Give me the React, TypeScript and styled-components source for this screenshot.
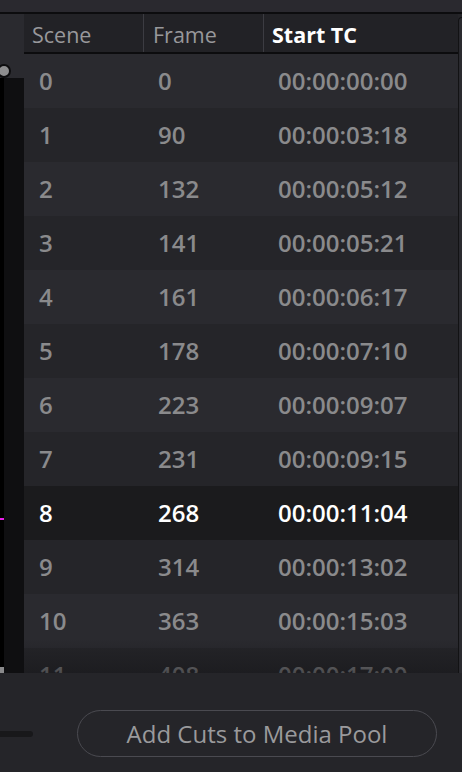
import React from "react";
import styled, { createGlobalStyle } from "styled-components";

const Global = createGlobalStyle`
  html, body { margin: 0; padding: 0; background: #252529; }
  body { font-family: "Open Sans", "Noto Sans", sans-serif; }
  * { box-sizing: border-box; }
`;

const Page = styled.div`
  width: 462px;
  height: 772px;
  display: flex;
  flex-direction: column;
  background: #252529;
  overflow: hidden;
`;

const TopBar = styled.div`
  height: 14px;
  background: #2a292f;
  border-bottom: 2px solid #0c0c0e;
  flex: none;
`;

const Main = styled.div`
  height: 659px;
  display: flex;
  flex: none;
`;

const LeftStrip = styled.div`
  width: 24px;
  display: flex;
  flex-direction: column;
  flex: none;
`;

const LeftTop = styled.div`
  height: 64px;
  background: #2a2a2f;
  position: relative;
  flex: none;
`;

const Handle = styled.div`
  position: absolute;
  left: -3px;
  top: 50px;
  width: 14px;
  height: 14px;
  border-radius: 50%;
  background: #8e8e90;
  border: 2px solid #0d0d0f;
`;

const LeftBody = styled.div`
  flex: 1;
  display: flex;
`;

const Track = styled.div`
  width: 4px;
  background: #000;
  position: relative;
`;

const Mark = styled.div<{ $top: number; $color: string; $h: number }>`
  position: absolute;
  left: 0;
  width: 4px;
  top: ${(p) => p.$top}px;
  height: ${(p) => p.$h}px;
  background: ${(p) => p.$color};
`;

const LeftFill = styled.div`
  flex: 1;
  background: #0f0f11;
`;

const Table = styled.div`
  flex: 1;
  display: flex;
  flex-direction: column;
  position: relative;
  overflow: hidden;
`;

const Header = styled.div`
  height: 40px;
  display: grid;
  grid-template-columns: 119px 120px 1fr;
  background: #222226;
  border-bottom: 2px solid #0c0c0e;
  flex: none;
`;

const HeadCell = styled.div<{ $active?: boolean; $sep?: boolean; $pad: number }>`
  display: flex;
  align-items: center;
  padding-left: ${(p) => p.$pad}px;
  padding-top: 3px;
  font-size: 21.5px;
  font-weight: ${(p) => (p.$active ? 700 : 400)};
  color: ${(p) => (p.$active ? "#ffffff" : "#98989b")};
  border-left: ${(p) => (p.$sep ? "1px solid #3c3c42" : "none")};
`;

const Row = styled.div<{ $odd: boolean; $sel: boolean }>`
  height: 54px;
  flex: none;
  display: grid;
  grid-template-columns: 119px 120px 1fr;
  align-items: center;
  background: ${(p) => (p.$sel ? "#1b1b1d" : p.$odd ? "#252529" : "#2a2a2f")};
  color: ${(p) => (p.$sel ? "#ffffff" : "#8a8a8c")};
`;

const Cell = styled.div<{ $pad: number }>`
  padding-left: ${(p) => p.$pad}px;
  font-size: 24px;
  font-weight: 600;
  line-height: 1;
  padding-top: 0px;
`;

const Fade = styled.div`
  position: absolute;
  left: 0;
  right: 0;
  bottom: 0;
  height: 34px;
  background: linear-gradient(to bottom, rgba(22, 22, 25, 0), rgba(22, 22, 25, 0.55));
  pointer-events: none;
`;

const ScrollTrack = styled.div`
  width: 4px;
  flex: none;
  margin-top: 3px;
  background: #2a2a2f;
  border-left: 1px solid #121214;
  border-top: 1px solid #121214;
  border-top-left-radius: 4px;
`;

const Footer = styled.div`
  flex: 1;
  display: flex;
  align-items: flex-start;
  background: #252529;
  padding-top: 37px;
`;

const FooterRow = styled.div`
  display: flex;
  align-items: center;
  height: 47px;
`;

const MiniSlider = styled.div`
  width: 33px;
  height: 6px;
  border-radius: 0 3px 3px 0;
  background: #18181a;
  flex: none;
`;

const Button = styled.button`
  margin-left: 44px;
  width: 360px;
  height: 47px;
  border-radius: 24px;
  border: 1.5px solid #4a4a50;
  background: transparent;
  color: #9a9a9c;
  font-family: "Open Sans", "Noto Sans", sans-serif;
  font-size: 24px;
  font-weight: 400;
  padding: 0;
`;

const rows: [string, string, string][] = [
  ["0", "0", "00:00:00:00"],
  ["1", "90", "00:00:03:18"],
  ["2", "132", "00:00:05:12"],
  ["3", "141", "00:00:05:21"],
  ["4", "161", "00:00:06:17"],
  ["5", "178", "00:00:07:10"],
  ["6", "223", "00:00:09:07"],
  ["7", "231", "00:00:09:15"],
  ["8", "268", "00:00:11:04"],
  ["9", "314", "00:00:13:02"],
  ["10", "363", "00:00:15:03"],
  ["11", "408", "00:00:17:00"],
];

export default function App() {
  return (
    <Page>
      <Global />
      <TopBar />
      <Main>
        <LeftStrip>
          <LeftTop>
            <Handle />
          </LeftTop>
          <LeftBody>
            <Track>
              <Mark $top={440} $h={2} $color="#e81ee8" />
              <Mark $top={589} $h={6} $color="#8a8a8c" />
            </Track>
            <LeftFill />
          </LeftBody>
        </LeftStrip>
        <Table>
          <Header>
            <HeadCell $pad={8}>Scene</HeadCell>
            <HeadCell $pad={9} $sep>Frame</HeadCell>
            <HeadCell $pad={8} $sep $active>Start TC</HeadCell>
          </Header>
          {rows.map((r, i) => (
            <Row key={i} $odd={i % 2 === 1} $sel={i === 8}>
              <Cell $pad={15}>{r[0]}</Cell>
              <Cell $pad={15}>{r[1]}</Cell>
              <Cell $pad={15}>{r[2]}</Cell>
            </Row>
          ))}
          <Fade />
        </Table>
        <ScrollTrack />
      </Main>
      <Footer>
        <FooterRow>
          <MiniSlider />
          <Button>Add Cuts to Media Pool</Button>
        </FooterRow>
      </Footer>
    </Page>
  );
}
